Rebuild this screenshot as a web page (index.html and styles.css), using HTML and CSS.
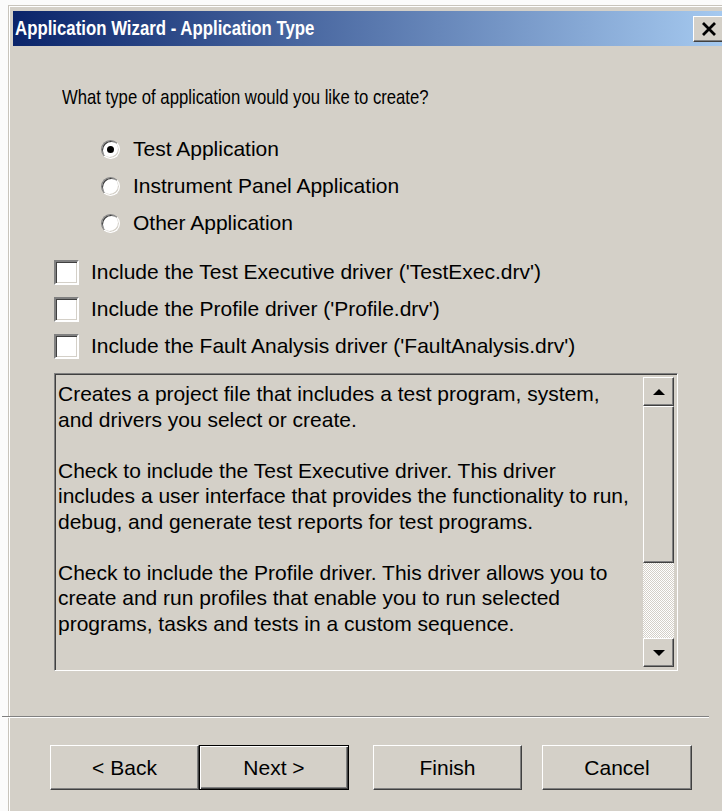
FILE: index.html
```html
<!DOCTYPE html>
<html lang="en">
<head>
<meta charset="utf-8">
<title>Application Wizard - Application Type</title>
<link rel="stylesheet" href="styles.css">
</head>
<body>
<div class="window">
  <div class="titlebar">
    <span class="title">Application Wizard - Application Type</span>
    <button class="close" aria-label="Close">
      <svg width="16" height="14" viewBox="0 0 16 14"><path d="M2 1 L14 13 M14 1 L2 13" stroke="#000" stroke-width="2.8" fill="none"/></svg>
    </button>
  </div>
  <div class="body">
    <p class="question"><span class="narrow">What type of application would you like to create?</span></p>
    <ul class="radios">
      <li class="row radio-row"><span class="radio checked"></span><span>Test Application</span></li>
      <li class="row radio-row"><span class="radio"></span><span>Instrument Panel Application</span></li>
      <li class="row radio-row"><span class="radio"></span><span>Other Application</span></li>
    </ul>
    <ul class="checks">
      <li class="row check-row"><span class="checkbox"></span><span>Include the Test Executive driver ('TestExec.drv')</span></li>
      <li class="row check-row"><span class="checkbox"></span><span>Include the Profile driver ('Profile.drv')</span></li>
      <li class="row check-row"><span class="checkbox"></span><span>Include the Fault Analysis driver ('FaultAnalysis.drv')</span></li>
    </ul>
    <div class="memo">
      <div class="memo-text">
        <p>Creates a project file that includes a test program, system,<br>and drivers you select or create.</p>
        <p>Check to include the Test Executive driver. This driver<br>includes a user interface that provides the functionality to run,<br>debug, and generate test reports for test programs.</p>
        <p>Check to include the Profile driver. This driver allows you to<br>create and run profiles that enable you to run selected<br>programs, tasks and tests in a custom sequence.</p>
      </div>
      <div class="scrollbar">
        <div class="sb-btn"><span class="arrow-up"></span></div>
        <div class="sb-thumb"></div>
        <div class="sb-track"></div>
        <div class="sb-btn"><span class="arrow-down"></span></div>
      </div>
    </div>
    <hr class="separator">
    <div class="buttons">
      <button class="btn btn-back">&lt; Back</button>
      <button class="btn btn-next">Next &gt;</button>
      <button class="btn btn-finish">Finish</button>
      <button class="btn btn-cancel">Cancel</button>
    </div>
  </div>
</div>
</body>
</html>
```
FILE: styles.css
```css
html, body {
  margin: 0;
  height: 100%;
  overflow: hidden;
  background: #fbfbfb;
}

body {
  font-family: "Liberation Sans", Arial, sans-serif;
  color: #000;
}

/* dialog frame */
.window {
  box-sizing: border-box;
  margin: 5px 0 0 8px;
  width: 723px;
  height: 830px;
  background: #d4d0c8;
  border-top: 1px solid #c8c4bc;
  border-left: 1px solid #c8c4bc;
  box-shadow: inset 1px 1px 0 #fff;
  padding: 5px 4px 0 4px;
}

.titlebar {
  height: 35px;
  display: flex;
  align-items: center;
  padding-left: 2px;
  background: linear-gradient(90deg, #0a246a 0%, #a6caf0 100%);
}

/* condensed caption face */
.title {
  display: inline-block;
  color: #fff;
  font-weight: bold;
  font-size: 20px;
  white-space: nowrap;
  transform: scaleX(0.84);
  transform-origin: left center;
}

.close {
  margin-left: auto;
  margin-right: 3px;
  width: 31px;
  height: 26px;
  padding: 0;
  display: flex;
  align-items: center;
  justify-content: center;
  background: #d4d0c8;
  border: 1px solid;
  border-color: #fff #404040 #404040 #fff;
  box-shadow: inset -1px -1px 0 #808080;
}

/* dialog body */
.question {
  margin: 39px 0 0 49px;
  font-size: 21px;
  line-height: 24px;
  white-space: nowrap;
}

.narrow {
  display: inline-block;
  transform: scaleX(0.795);
  transform-origin: left center;
}

.radios, .checks {
  list-style: none;
  padding: 0;
}

.radios {
  margin: 21.5px 0 0 88px;
}

.checks {
  margin: 12px 0 0 41px;
}

.row {
  height: 37px;
  display: flex;
  align-items: center;
  font-size: 21px;
  white-space: nowrap;
}

.radio-row { gap: 13px; }
.check-row { gap: 12px; }

.radio {
  box-sizing: border-box;
  width: 19px;
  height: 19px;
  border-radius: 50%;
  background: #fff;
  border: 1px solid;
  border-color: #808080 #fff #fff #808080;
  box-shadow: inset 1px 1px 0 #404040, inset -1px -1px 0 #d4d0c8;
  display: flex;
  align-items: center;
  justify-content: center;
}

.radio.checked::after {
  content: "";
  width: 7px;
  height: 7px;
  border-radius: 50%;
  background: #000;
}

.checkbox {
  box-sizing: border-box;
  width: 25px;
  height: 25px;
  background: #fff;
  border: 2px solid;
  border-color: #808080 #fff #fff #808080;
  box-shadow: inset 1px 1px 0 #404040, inset -1px -1px 0 #d4d0c8;
}

/* read-only description box */
.memo {
  box-sizing: border-box;
  margin: 8.5px 0 0 41px;
  width: 624px;
  height: 298px;
  display: flex;
  padding: 1px;
  border: 1px solid;
  border-color: #808080 #fff #fff #808080;
  box-shadow: inset 1px 1px 0 #404040;
}

.memo-text {
  flex: 1;
  padding: 6px 0 0 2px;
  font-size: 21px;
  line-height: 25.5px;
  white-space: nowrap;
  overflow: hidden;
}

.memo-text p {
  margin: 0 0 25.5px;
}

.scrollbar {
  width: 31px;
  margin-right: 2px;
  padding: 2px 0;
  display: flex;
  flex-direction: column;
}

.sb-btn, .sb-thumb {
  box-sizing: border-box;
  background: #d4d0c8;
  border: 1px solid;
  border-color: #fff #404040 #404040 #fff;
  box-shadow: inset -1px -1px 0 #808080;
}

.sb-btn {
  height: 29px;
  display: flex;
  align-items: center;
  justify-content: center;
}

.sb-thumb {
  height: 157px;
}

.sb-track {
  flex: 1;
  background: repeating-conic-gradient(#fff 0 25%, #d4d0c8 0 50%) 0 0 / 2px 2px;
}

.arrow-up, .arrow-down {
  width: 0;
  height: 0;
  border-left: 6px solid transparent;
  border-right: 6px solid transparent;
}

.arrow-up { border-bottom: 6px solid #000; }
.arrow-down { border-top: 6px solid #000; }

/* etched rule above the command buttons, running out under the frame edge */
.separator {
  margin: 45px 0 0 -11px;
  width: 707px;
  height: 0;
  border: 0;
  border-top: 1px solid #808080;
  border-bottom: 1px solid #fff;
}

/* command buttons */
.buttons {
  display: flex;
  margin: 27px 0 0 37px;
}

.btn {
  box-sizing: border-box;
  height: 45px;
  padding: 0;
  font-family: "Liberation Sans", Arial, sans-serif;
  font-size: 21px;
  color: #000;
  background: #d4d0c8;
  border: 1px solid;
  border-color: #fff #404040 #404040 #fff;
  box-shadow: inset -1px -1px 0 #808080;
}

.btn-back { width: 149px; }
.btn-next {
  width: 150px;
  margin-right: 24px;
  border: 1px solid #000;
  box-shadow: inset 1px 1px 0 #fff, inset -1px -1px 0 #404040, inset -2px -2px 0 #808080;
}
.btn-finish { width: 149px; margin-right: 20px; }
.btn-cancel { width: 150px; }
```
